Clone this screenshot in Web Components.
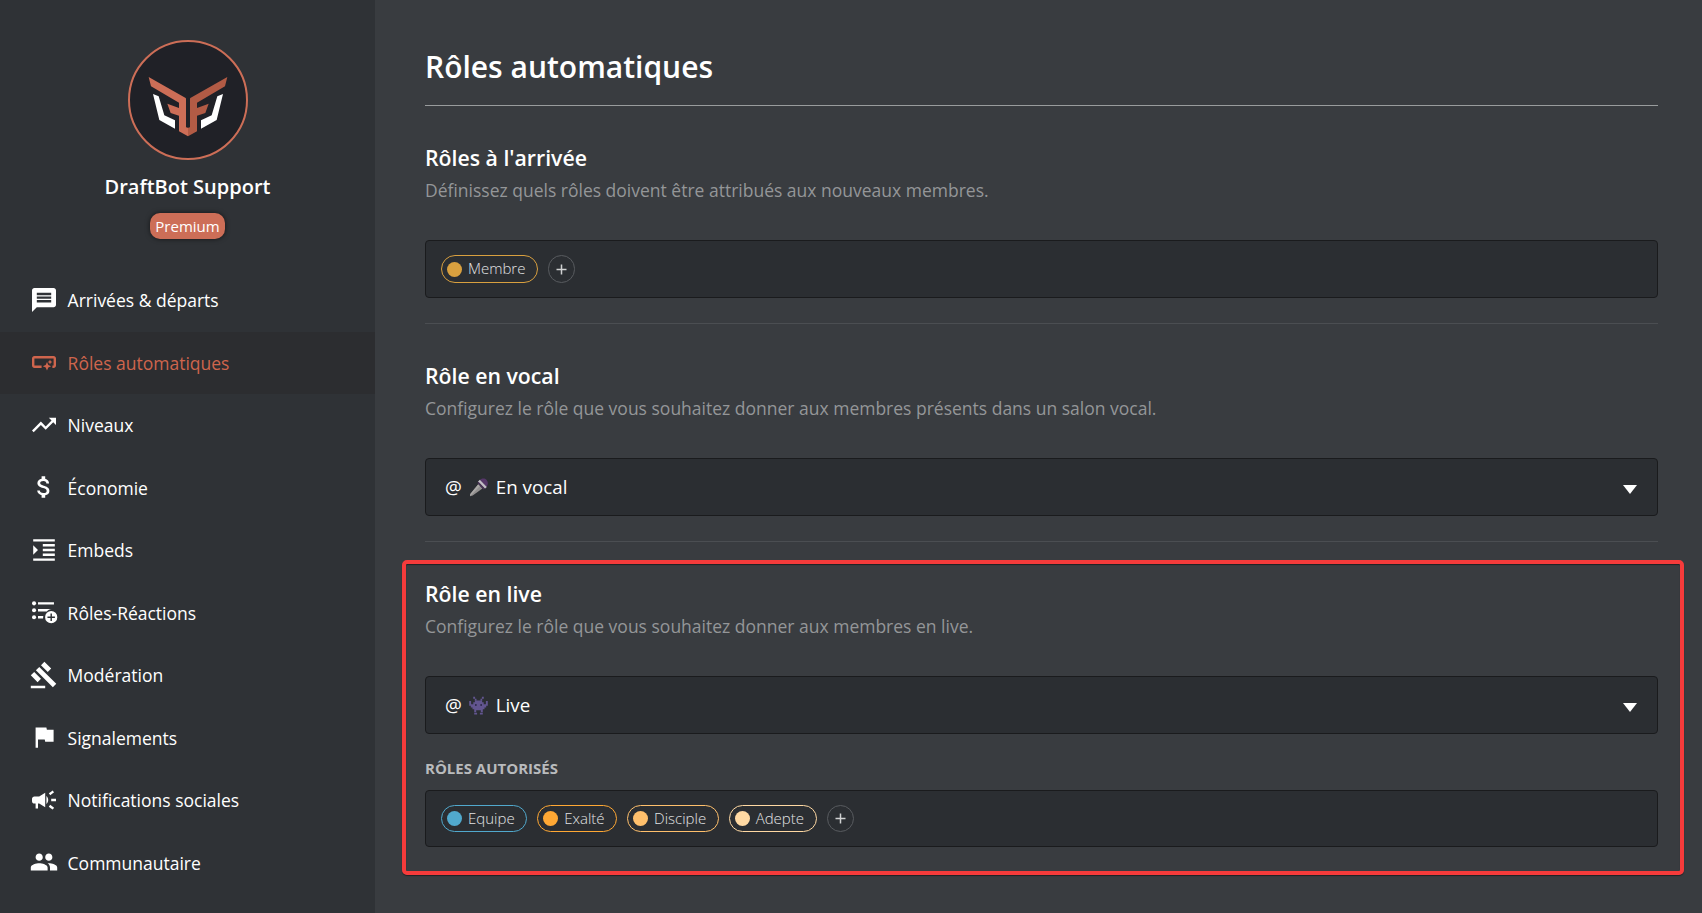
<!DOCTYPE html>
<html lang="fr">
<head>
<meta charset="utf-8">
<title>Rôles automatiques</title>
<style>
  html, body { margin: 0; height: 100%; }
  body { background: #393c40; font-family: "Open Sans", "Noto Sans", sans-serif; color: #fff; overflow: hidden; }
</style>
</head>
<body>
<app-shell>
  <side-bar slot="side">
    <guild-card slot="head" name="DraftBot Support" badge="Premium"></guild-card>
    <nav-item icon="message">Arrivées &amp; départs</nav-item>
    <nav-item icon="smart" active>Rôles automatiques</nav-item>
    <nav-item icon="trend">Niveaux</nav-item>
    <nav-item icon="money">Économie</nav-item>
    <nav-item icon="indent">Embeds</nav-item>
    <nav-item icon="listadd">Rôles-Réactions</nav-item>
    <nav-item icon="gavel">Modération</nav-item>
    <nav-item icon="flag">Signalements</nav-item>
    <nav-item icon="campaign">Notifications sociales</nav-item>
    <nav-item icon="people">Communautaire</nav-item>
  </side-bar>
  <page-title>Rôles automatiques</page-title>
  <role-section heading="Rôles à l'arrivée" desc="Définissez quels rôles doivent être attribués aux nouveaux membres.">
    <chip-box>
      <role-chip color="#d9a03f">Membre</role-chip>
      <add-button></add-button>
    </chip-box>
  </role-section>
  <role-section heading="Rôle en vocal" desc="Configurez le rôle que vous souhaitez donner aux membres présents dans un salon vocal.">
    <role-select icon="mic">En vocal</role-select>
  </role-section>
  <role-section highlighted heading="Rôle en live" desc="Configurez le rôle que vous souhaitez donner aux membres en live.">
    <role-select icon="alien">Live</role-select>
    <field-label>RÔLES AUTORISÉS</field-label>
    <chip-box compact>
      <role-chip color="#51a9cd">Equipe</role-chip>
      <role-chip color="#ffa834">Exalté</role-chip>
      <role-chip color="#ffc06c">Disciple</role-chip>
      <role-chip color="#ffd9a3">Adepte</role-chip>
      <add-button></add-button>
    </chip-box>
  </role-section>
</app-shell>
<script>
const ICONS = {
  message: '<path d="M20 2H4c-1.1 0-1.99.9-1.99 2L2 22l4-4h14c1.1 0 2-.9 2-2V4c0-1.1-.9-2-2-2zm-2 12H6v-2h12v2zm0-3H6V9h12v2zm0-3H6V6h12v2z"/>',
  smart: '<path d="M22 9v6c0 1.1-.9 2-2 2h-1v-2h1V9H4v6h6v2H4c-1.1 0-2-.9-2-2V9c0-1.1.9-2 2-2h16c1.1 0 2 .9 2 2zm-7.5 10l1.09-2.41L18 15.5l-2.41-1.09L14.5 12l-1.09 2.41L11 15.5l2.41 1.09L14.5 19zm2.5-5l.62-1.38L19 12l-1.38-.62L17 10l-.62 1.38L15 12l1.38.62L17 14z"/>',
  trend: '<path d="M16 6l2.29 2.29-4.88 4.88-4-4L2 16.59 3.41 18l6-6 4 4 6.3-6.29L22 12V6z"/>',
  money: '<path d="M11.8 10.9c-2.27-.59-3-1.2-3-2.15 0-1.09 1.01-1.85 2.7-1.85 1.78 0 2.44.85 2.5 2.1h2.21c-.07-1.72-1.12-3.3-3.21-3.81V3h-3v2.16c-1.94.42-3.5 1.68-3.5 3.61 0 2.31 1.91 3.46 4.7 4.13 2.5.6 3 1.48 3 2.41 0 .69-.49 1.79-2.7 1.79-2.06 0-2.87-.92-2.98-2.1h-2.2c.12 2.19 1.76 3.42 3.68 3.83V21h3v-2.15c1.95-.37 3.5-1.5 3.5-3.55 0-2.84-2.43-3.81-4.7-4.4z"/>',
  indent: '<path d="M3 21h18v-2H3v2zM3 8v8l4-4-4-4zm8 9h10v-2H11v2zM3 3v2h18V3H3zm8 6h10V7H11v2zm0 4h10v-2H11v2z"/>',
  listadd: '<circle cx="3.7" cy="4.8" r="1.7"/><circle cx="3.7" cy="10.6" r="1.7"/><circle cx="3.7" cy="16.4" r="1.7"/><path d="M7 3.8h13.300v2H7zM7 9.600h11.400c-1.700.2-3.100.9-4 2H7zM7 15.400h4.400l-.2 2H7z"/><path fill-rule="evenodd" d="M18 11.200a5.100 5.100 0 1 0 0 10.200 5.100 5.100 0 0 0 0-10.200zm-.6 2h1.200v2.500h2.500v1.200h-2.500v2.500h-1.200v-2.500h-2.500v-1.200h2.500z"/>',
  gavel: '<path d="M1 21h12v2H1v-2zM5.240 8.070l2.830-2.830 14.140 14.140-2.830 2.830L5.240 8.070zM12.320 1l5.660 5.660-2.830 2.830-5.660-5.660L12.320 1zM3.830 9.480l5.660 5.660-2.830 2.830L1 12.310l2.830-2.830z"/>',
  flag: '<path d="M14.400 6L14 4H5v17h2v-7h5.600l.4 2h7V6z"/>',
  campaign: '<path d="M18 11v2h4v-2h-4zm-2 6.610c.96.71 2.210 1.650 3.200 2.390.4-.53.8-1.070 1.200-1.600-.99-.74-2.240-1.680-3.200-2.400-.4.540-.8 1.080-1.200 1.610zM20.400 5.600c-.4-.53-.8-1.070-1.200-1.600-.99.740-2.240 1.680-3.200 2.400.4.530.8 1.070 1.200 1.600.96-.72 2.210-1.650 3.200-2.400zM4 9c-1.100 0-2 .9-2 2v2c0 1.100.9 2 2 2h1v4h2v-4h1l5 3V6L8 9H4zm11.500 3c0-1.330-.58-2.530-1.500-3.350v6.690c.92-.81 1.500-2.010 1.500-3.340z"/>',
  people: '<path d="M16 11c1.660 0 2.990-1.340 2.990-3S17.660 5 16 5c-1.660 0-3 1.340-3 3s1.340 3 3 3zm-8 0c1.660 0 2.990-1.340 2.990-3S9.660 5 8 5C6.340 5 5 6.340 5 8s1.340 3 3 3zm0 2c-2.330 0-7 1.170-7 3.500V19h14v-2.500c0-2.330-4.670-3.500-7-3.500zm8 0c-.29 0-.62.020-.97.050 1.160.840 1.970 1.970 1.970 3.450V19h6v-2.500c0-2.330-4.670-3.500-7-3.500z"/>'
};

/* Emoji drawn on a 19-unit grid */
const EMOJI = {
  mic: `<path d="M1 18.300l.300-2.300L9.300 6.200l4.100 4.300-9.700 7.100z" fill="#92908f"/>
        <path d="M1 18.300l.300-2.300L9.300 6.200l1.700 1.700z" fill="#aaa8a6"/>
        <path d="M10.600 2.200C12.600 0 15.900.2 17.600 2s1.700 5-.3 6.800z" fill="#553768"/>
        <path d="M8.900 3.700l1.900-1.900 7 7.300-1.900 1.700z" fill="#c3bfc6"/>
        <path d="M8.300 4.900l1.200-1.200 6.500 6.800-1.300 1.200z" fill="#493556"/>`,
  alien: `<g fill="#62558f"><path d="M4.200.8h1.900v1.900H4.200zM12.900.8h1.900v1.900h-1.900zM5.800 2.700h1.700v2H5.800zM11.500 2.700h1.700v2h-1.700z"/>
        <path d="M.2 5h1.900v3.300h2.200V6.200h1.600V4.500h7.200v1.700h1.600v2.100h2.200V5h1.900v4.700h-1.600v1.700h-1.700v1.800h-1.700v3h-2v-2H7.200v2h-2v-3H3.500v-1.800H1.800V9.700H.2z"/>
        <path d="M5.200 16.700h2.900v1.700H5.200zM10.900 16.700h2.900v1.700h-2.900z"/></g>
        <path d="M6.100 8h1.500v1.900H6.100zM11.400 8h1.500v1.900h-1.500z" fill="#2f2b4c"/>`
};

class Base extends HTMLElement {
  connectedCallback() {
    if (this.shadowRoot) return;
    this.attachShadow({ mode: 'open' }).innerHTML = this.view();
  }
  attr(n) { return this.getAttribute(n) || ''; }
}

customElements.define('app-shell', class extends Base {
  view() { return `<style>
    :host { display: grid; grid-template-columns: 375px 1fr; height: 913px; overflow: hidden; }
    aside { background: #2f3236; }
    main { padding: 46px 44px 0 50px; min-width: 0; }
  </style><aside><slot name="side"></slot></aside><main><slot></slot></main>`; }
});

customElements.define('side-bar', class extends Base {
  view() { return `<style>
    :host { display: flex; flex-direction: column; padding-top: 40px; }
    nav { display: flex; flex-direction: column; margin-top: 30px; }
  </style><slot name="head"></slot><nav><slot></slot></nav>`; }
});

customElements.define('guild-card', class extends Base {
  view() { return `<style>
    :host { display: flex; flex-direction: column; align-items: center; }
    svg { width: 120px; height: 120px; display: block; }
    .name { margin-top: 13px; font-size: 20px; line-height: 27px; font-weight: 600; }
    .badge { margin-top: 13px; width: 75px; height: 26px; line-height: 26px; border-radius: 10px; background: #cd6e57;
      font-size: 15px; text-align: center; box-shadow: 0 0 5px rgba(0,0,0,.6); }
  </style>
  <svg viewBox="114 30 360 360">
    <circle cx="294" cy="210" r="177" fill="#202127" stroke="#cd6e57" stroke-width="6"/>
    <path fill="#cd6e57" d="M176 141l111 63q1 1 1 3v83q0 3 6 3v26l-27-15v-47l-25-8-10-28 35 13v-16l-84-49z"/>
    <path fill="#b25b45" d="M412 141l-111 63q-1 1-1 3v83q0 3-6 3v26l27-15v-47l25-8 10-28-35 13v-16l84-49z"/>
    <path fill="#fff" d="M189 192l17 7 17 57 32 15v25l-47-26zM399 192l-17 7-17 57-32 15v25l47-26z"/>
  </svg>
  <div class="name">${this.attr('name')}</div><div class="badge">${this.attr('badge')}</div>`; }
});

customElements.define('nav-item', class extends Base {
  view() { return `<style>
    :host { display: flex; align-items: center; height: 62.5px; padding-left: 29px; gap: 8.600px; font-size: 17.5px; color: #fff; }
    :host([active]) { background: #2c2d30; color: #cf654d; }
    svg { width: 30px; height: 30px; fill: currentColor; flex: none; margin-bottom: 1px; }
  </style><svg viewBox="-.5 -.5 25 25">${ICONS[this.attr('icon')]}</svg><span><slot></slot></span>`; }
});

customElements.define('page-title', class extends Base {
  view() { return `<style>
    :host { display: block; padding-bottom: 18px; border-bottom: 1px solid #999c9d; }
    h1 { margin: 0; font-size: 30px; line-height: 41px; font-weight: 600; }
  </style><h1><slot></slot></h1>`; }
});

customElements.define('role-section', class extends Base {
  view() { return `<style>
    :host { display: flex; flex-direction: column; position: relative; margin-top: 37px; padding-bottom: 25px; border-bottom: 1px solid #4b4e52; }
    :host([highlighted]) { padding-bottom: 0; border-bottom: 0; }
    :host([highlighted])::after { content: ""; position: absolute; inset: -19px -26px -28px -23px; border: 4px solid #f53b3b;
      border-radius: 5px; box-shadow: 0 1px 1px rgba(0,0,0,.45), inset 0 1px 1px rgba(0,0,0,.45); pointer-events: none; }
    h2 { margin: 0; font-size: 21.25px; line-height: 29px; font-weight: 600; }
    p { margin: 6px 0 38px; font-size: 17.5px; line-height: 24px; color: #949698; }
  </style><h2>${this.attr('heading')}</h2><p>${this.attr('desc')}</p><slot></slot>`; }
});

const BOX = 'box-sizing: border-box; background: #2b2e32; border: 1px solid #1a1b1d; border-radius: 4px;';

customElements.define('chip-box', class extends Base {
  view() { return `<style>
    :host { display: flex; align-items: center; gap: 10px; height: 58px; padding: 0 15px; --chip: 28px; --lift: 2px; ${BOX} }
    :host([compact]) { height: 57px; --chip: 27px; --lift: 1px; }
  </style><slot></slot>`; }
});

customElements.define('role-chip', class extends Base {
  view() { const c = this.attr('color'); return `<style>
    :host { display: flex; align-items: center; gap: 6px; box-sizing: border-box; height: var(--chip); padding: 0 11.550px 0 5px;
      border: 1px solid ${c}; border-radius: 14px; font-size: 15px; font-weight: 300; line-height: 20px; color: #e2e3e4; }
    i { width: 15px; height: 15px; border-radius: 50%; background: ${c}; }
    span { margin-top: calc(0px - var(--lift)); }
  </style><i></i><span><slot></slot></span>`; }
});

customElements.define('add-button', class extends Base {
  view() { return `<style>
    :host { display: grid; place-items: center; box-sizing: border-box; width: 27px; height: var(--chip); border: 1px solid #585b5f; border-radius: 14px; }
    svg { width: 11px; height: 11px; display: block; }
  </style><svg viewBox="0 0 11 11"><path d="M5.500 .5v10M.5 5.500h10" stroke="#d0d1d2" stroke-width="1.500"/></svg>`; }
});

customElements.define('role-select', class extends Base {
  view() { return `<style>
    :host { display: flex; align-items: center; height: 58px; padding: 0 20px 0 19px; font-size: 18.75px; line-height: 26px; ${BOX} }
    .emoji { width: 19px; height: 19px; margin: 0 8px 0 7px; }
    .arrow { width: 14px; height: 9px; margin: 4px 0 0 auto; fill: #fff; }
  </style><span>@</span><svg class="emoji" viewBox="0 0 19 19">${EMOJI[this.attr('icon')]}</svg><span><slot></slot></span>
  <svg class="arrow" viewBox="0 0 14 9"><path d="M0 0h14L7 9z"/></svg>`; }
});

customElements.define('field-label', class extends Base {
  view() { return `<style>
    :host { display: block; margin: 24px 0 12px; font-size: 15px; line-height: 20px; font-weight: 700; color: #b9bbbd; }
  </style><slot></slot>`; }
});
</script>
</body>
</html>
